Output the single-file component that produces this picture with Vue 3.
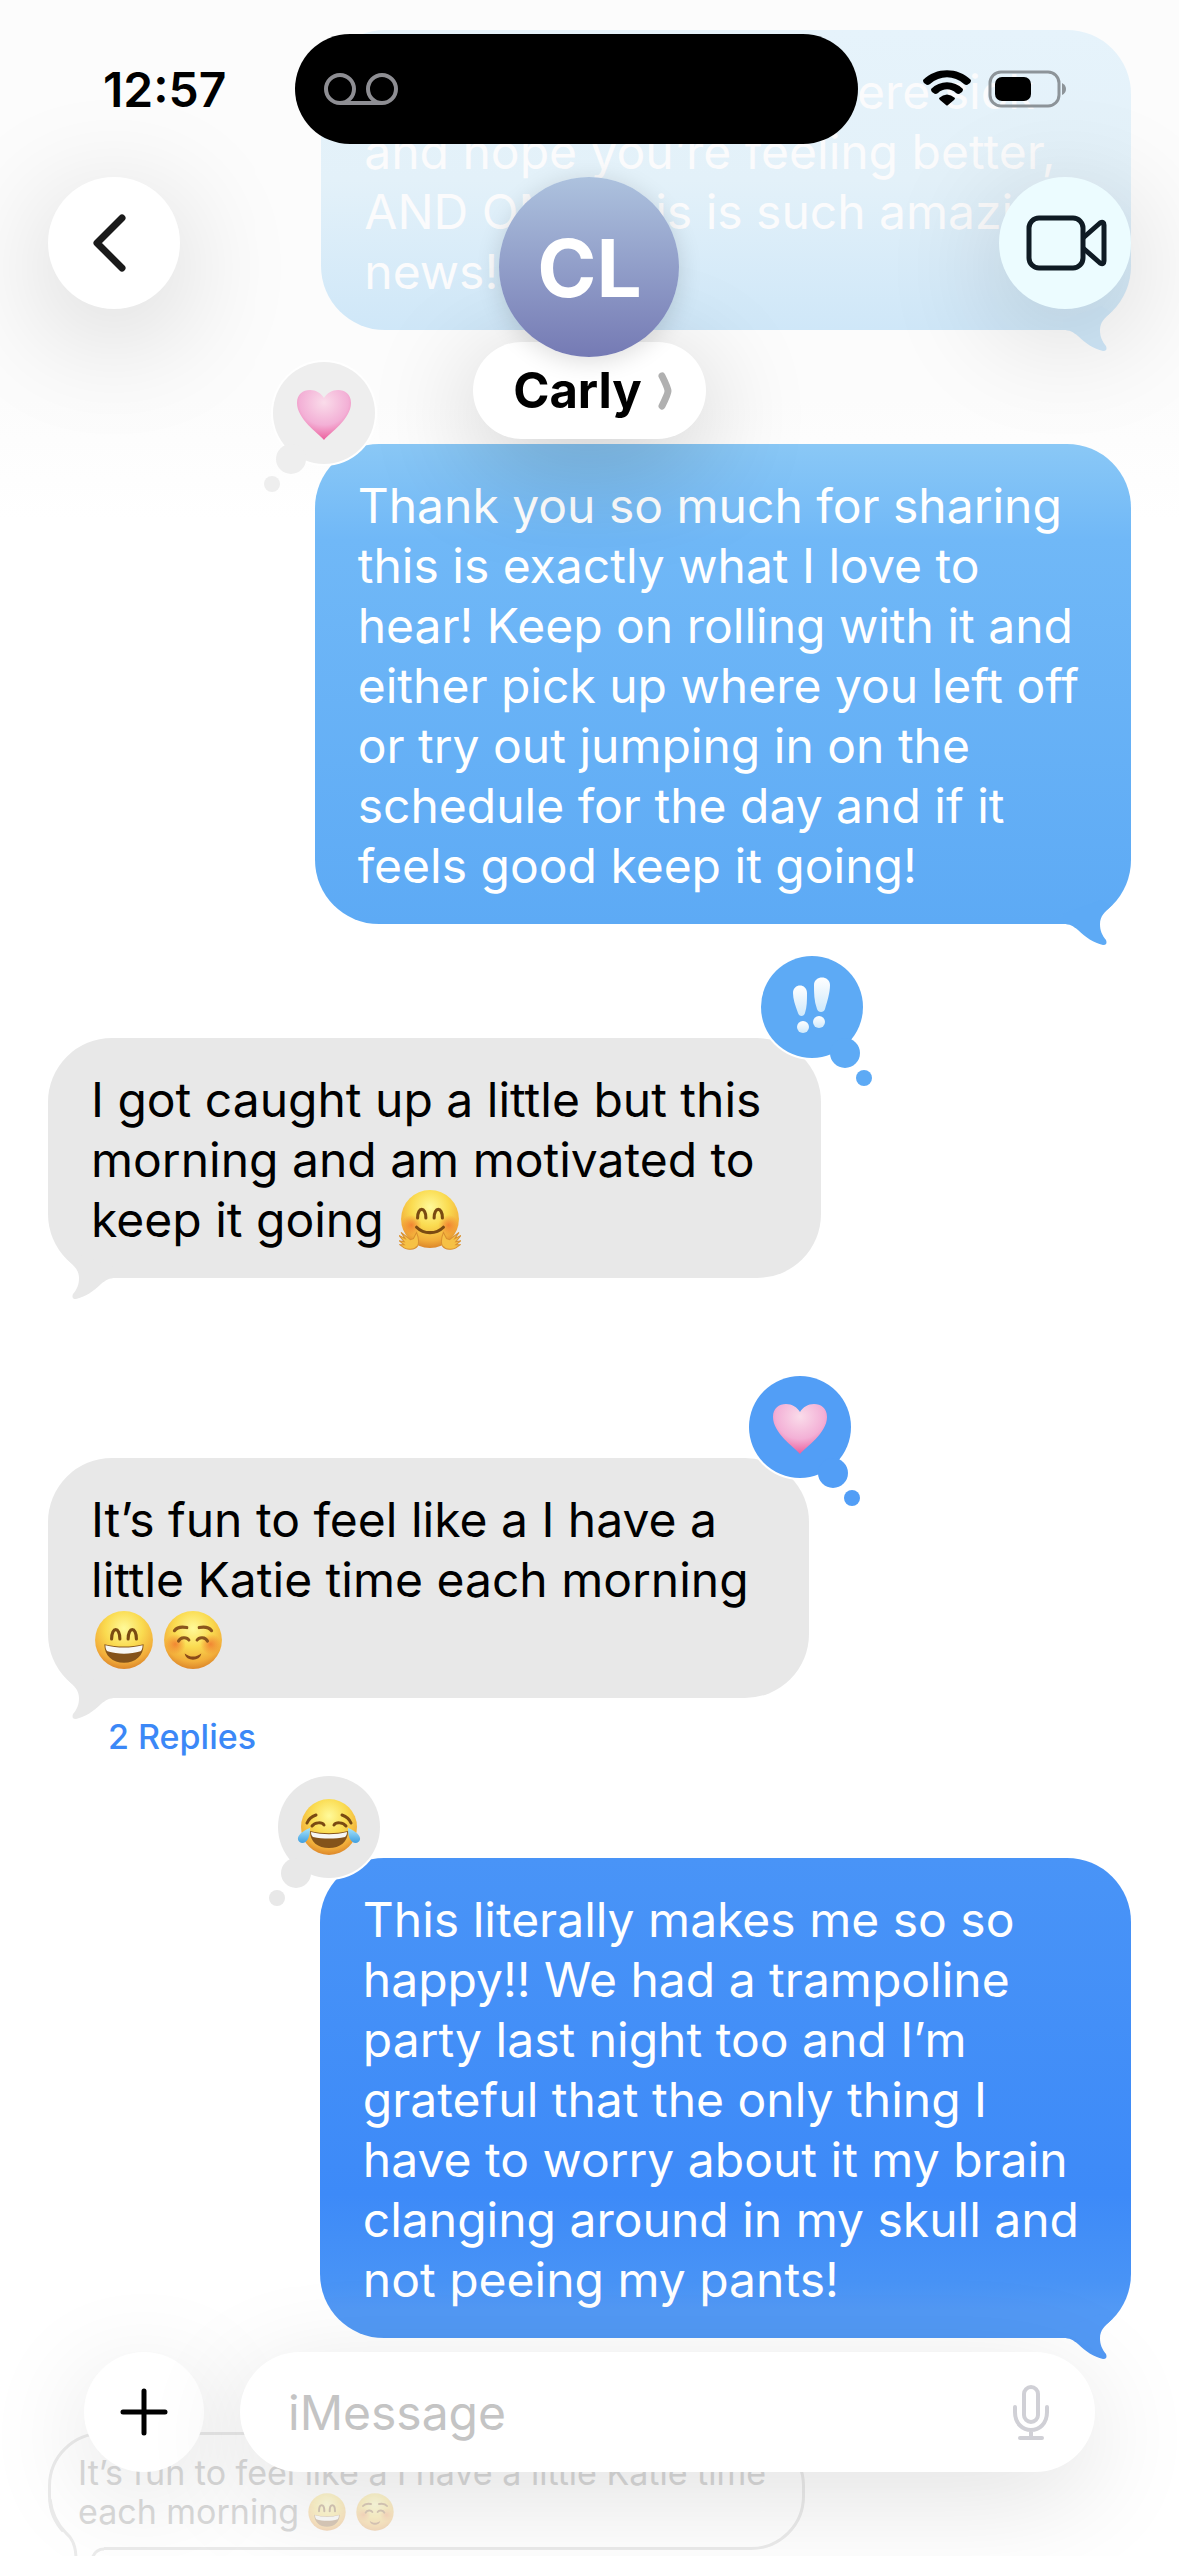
<!-- App.vue - Conversation screen -->
<template>
  <main class="phone">
    <!-- Shared emoji drawings -->
    <svg class="sprites" aria-hidden="true">
      <defs>
        <radialGradient id="face" cx="50%" cy="30%" r="72%">
          <stop offset="0" stop-color="#fffa9a" />
          <stop offset="0.45" stop-color="#fadb50" />
          <stop offset="0.8" stop-color="#f2ad3a" />
          <stop offset="1" stop-color="#d98128" />
        </radialGradient>
        <radialGradient id="blush">
          <stop offset="0" stop-color="#f0702c" stop-opacity="0.75" />
          <stop offset="1" stop-color="#f0702c" stop-opacity="0" />
        </radialGradient>
        <radialGradient id="heart-fill" cx="50%" cy="25%" r="75%">
          <stop offset="0" stop-color="#fadcea" />
          <stop offset="0.6" stop-color="#f3b0d6" />
          <stop offset="1" stop-color="#ec5f9c" />
        </radialGradient>
        <linearGradient id="tear" x1="0" y1="0" x2="0" y2="1">
          <stop offset="0" stop-color="#a9e4fb" />
          <stop offset="1" stop-color="#3f9fe0" />
        </linearGradient>
        <linearGradient id="mark" x1="0" y1="0" x2="0" y2="1">
          <stop offset="0" stop-color="#ffffff" />
          <stop offset="1" stop-color="#cfe9fb" />
        </linearGradient>
      </defs>
      <symbol id="grin" viewBox="0 0 60 60">
        <circle cx="30" cy="30" r="28" fill="url(#face)" />
        <path d="M18 29c0-12 8-12 8 0M34 29c0-12 8-12 8 0" fill="none" stroke="#7a4a12" stroke-width="3" stroke-linecap="round" />
        <path d="M11 34c12 3 26 3 38 0c0 11-8 18-19 18s-19-7-19-18z" fill="#84531a" />
        <path d="M12 35c12 3 24 3 36 0c0 3-1 5-2 6c-10 3-22 3-32 0c-1-1-2-3-2-6z" fill="#f7f7f4" />
      </symbol>
      <symbol id="smile" viewBox="0 0 60 60">
        <circle cx="30" cy="30" r="28" fill="url(#face)" />
        <circle cx="13" cy="34" r="10" fill="url(#blush)" />
        <circle cx="47" cy="34" r="10" fill="url(#blush)" />
        <path d="M12 21c3-4 7-4 12-3M48 21c-3-4-7-4-12-3M16 31c2-4 8-4 10-1M44 31c-2-4-8-4-10-1" fill="none" stroke="#8a551c" stroke-width="3" stroke-linecap="round" />
        <path d="M22 43c5 4 11 4 16 0c-1 8-15 8-16 0z" fill="#8a4a18" />
      </symbol>
      <symbol id="hug" viewBox="0 0 60 60">
        <circle cx="30" cy="29" r="28" fill="url(#face)" />
        <circle cx="12" cy="35" r="10" fill="url(#blush)" />
        <circle cx="48" cy="35" r="10" fill="url(#blush)" />
        <path d="M18 28c0-11 8-11 8 0M34 28c0-11 8-11 8 0" fill="none" stroke="#7a4a12" stroke-width="3" stroke-linecap="round" />
        <path d="M17 37c7 7 19 7 26 0" fill="none" stroke="#7a4a12" stroke-width="3" stroke-linecap="round" />
        <g fill="#f6c145" stroke="#d99030" stroke-width="1">
          <path d="M17 42c2 5 3 9 1 13c-3 4-10 4-13 2l-4-3l4 0l-5-4l5 1l-5-6l6 3l-4-6l9 7l3-1z" />
          <path d="M43 42c-2 5-3 9-1 13c3 4 10 4 13 2l4-3l-4 0l5-4l-5 1l5-6l-6 3l4-6l-9 7l-3-1z" />
        </g>
      </symbol>
      <symbol id="joy" viewBox="0 0 64 60">
        <circle cx="32" cy="30" r="28" fill="url(#face)" />
        <path d="M10 26c2-5 6-7 9-8M54 26c-2-5-6-7-9-8M15 29c3-4 10-4 12-1M49 29c-3-4-10-4-12-1" fill="none" stroke="#7a4a12" stroke-width="3" stroke-linecap="round" />
        <path d="M13 34c12 3 26 3 38 0c0 11-8 17-19 17s-19-6-19-17z" fill="#84531a" />
        <path d="M14 35c12 3 24 3 36 0c0 3-1 4-2 5c-10 2-22 2-32 0c-1-1-2-2-2-5z" fill="#f7f7f4" />
        <path d="M13 31c0 8-2 15-8 15c-6-1-7-9 8-15zM51 31c0 8 2 15 8 15c6-1 7-9-8-15z" fill="url(#tear)" />
      </symbol>
      <symbol id="heart" viewBox="0 0 60 60">
        <path d="M30 57C24 50 3 36 3 20C3 11 9 7 16 7C22 7 27 10 30 15C33 10 38 7 44 7C51 7 57 11 57 20C57 36 36 50 30 57z" fill="url(#heart-fill)" />
      </symbol>
      <symbol id="bangs" viewBox="0 0 60 60">
        <g fill="url(#mark)">
          <path d="M11 16c0-10 14-10 14 0c0 7 0 14-2 20c-1 4-6 4-7 0c-3-8-5-14-5-20z" />
          <path d="M32 8c0-10 16-10 16 0c0 8-3 17-5 24c-1 4-7 4-8 0c-3-8-3-16-3-24z" />
          <circle cx="21" cy="50" r="6" />
          <circle cx="37" cy="45" r="6" />
        </g>
      </symbol>
    </svg>

    <section class="conversation" aria-label="Conversation with Carly">
      <article
        v-for="message in messages"
        :key="message.id"
        class="message"
        :class="[message.sent ? 'sent' : 'received', message.tone]"
      >
        <div class="bubble">
          <p v-for="(line, index) in message.lines" :key="index" class="line">
            {{ line.text
            }}<svg v-for="name in line.emoji" :key="name" class="emoji" role="img" :aria-label="name">
              <use :href="`#${name}`" />
            </svg>
          </p>

          <svg class="tail" viewBox="0 0 70 84" aria-hidden="true">
            <path d="M2 50V60C9 60 12 62 17 66C24 73 33 79 42 81Q47 81 45 76C41 71 39 67 39 60C39 52 44 48 50 42L40 36z" />
          </svg>

          <div v-if="message.reaction" class="reaction" role="img" :aria-label="`Reaction: ${message.reaction}`">
            <svg class="thought" viewBox="0 0 102 102">
              <circle class="ring" cx="51" cy="51" r="53" />
              <circle cx="51" cy="51" r="51" />
              <circle cx="84" cy="97" r="15" />
              <circle cx="103" cy="122" r="8" />
            </svg>
            <svg class="reaction-icon" :class="message.reaction">
              <use :href="`#${message.reaction}`" />
            </svg>
          </div>
        </div>
        <a v-if="message.replies" href="#replies" class="replies">{{ message.replies }} Replies</a>
      </article>

      <blockquote id="replies" class="quote">
        <svg class="quote-tail" viewBox="0 0 56 60" aria-hidden="true">
          <path class="patch" d="M8 34L20 32L56 44V60H8z" />
          <path d="M2 0C4 16 10 26 18 34Q28 42 28 60M44 60Q47 50 56 50" />
        </svg>
        <p>It’s fun to feel like a I have a little Katie time</p>
        <p>
          each morning
          <svg class="emoji-small"><use href="#grin" /></svg>
          <svg class="emoji-small"><use href="#smile" /></svg>
        </p>
      </blockquote>
    </section>

    <header class="top">
      <div class="status">
        <time class="clock">12:57</time>
        <div class="island">
          <svg width="76" height="34" viewBox="0 0 76 34" fill="none" stroke="#8e8e93" stroke-width="4" aria-label="Voicemail">
            <circle cx="17" cy="17" r="14" />
            <circle cx="59" cy="17" r="14" />
            <path d="M17 31H59" />
          </svg>
        </div>
        <div class="indicators">
          <svg width="48" height="36" viewBox="0 0 48 36" aria-label="Wi-Fi">
            <path d="M0 10C13-3 35-3 48 10Q48 12 47 13L44 15Q42 15 41 14C31 5 17 5 7 14Q6 15 4 15L1 13Q0 12 0 10z" />
            <path d="M8 19C17 10 31 10 40 19Q40 21 39 22L36 24Q34 24 33 23C28 18 20 18 15 23Q14 24 12 24L9 22Q8 21 8 19z" />
            <path d="M16 28Q24 21 32 28Q32 29 31 30L25 35Q24 36 23 35L17 30Q16 29 16 28z" />
          </svg>
          <svg width="80" height="38" viewBox="0 0 80 38" aria-label="Battery">
            <rect x="2" y="2" width="69" height="34" rx="11" fill="none" stroke="#8d9499" stroke-width="3" />
            <rect x="7" y="7" width="36" height="24" rx="7" />
            <path d="M74 13Q78 15 78 19T74 25z" fill="#8d9499" />
          </svg>
        </div>
      </div>

      <nav class="nav">
        <button type="button" class="round back" aria-label="Back">
          <svg width="34" height="58" viewBox="0 0 34 58" fill="none" stroke="#1a1a1a" stroke-width="7" stroke-linecap="round" stroke-linejoin="round">
            <path d="M29 4L4 29L29 54" />
          </svg>
        </button>
        <div class="contact">
          <span class="avatar">CL</span>
          <button type="button" class="name">
            Carly
            <svg width="14" height="38" viewBox="0 0 14 38" fill="none" stroke="#b0b0b0" stroke-width="7" stroke-linecap="round" stroke-linejoin="round">
              <path d="M4 4Q10 16 10 19T4 34" />
            </svg>
          </button>
        </div>
        <button type="button" class="round video" aria-label="Video call">
          <svg width="82" height="56" viewBox="0 0 82 56" fill="none" stroke="#0f1b24" stroke-width="5" stroke-linejoin="round">
            <rect x="3" y="3" width="54" height="50" rx="10" />
            <path d="M57 23L74 8Q78 6 78 10V46Q78 50 74 48L57 33" />
          </svg>
        </button>
      </nav>
    </header>

    <footer class="composer">
      <button type="button" class="add" aria-label="Add attachment">
        <svg width="48" height="48" viewBox="0 0 48 48" stroke="#000" stroke-width="5" stroke-linecap="round">
          <path d="M24 3V45M3 24H45" />
        </svg>
      </button>
      <div class="field">
        <input v-model="draft" type="text" placeholder="iMessage" aria-label="iMessage" />
        <button type="button" class="dictate" aria-label="Dictate">
          <svg width="38" height="56" viewBox="0 0 38 56" fill="none" stroke="#d0d0d6" stroke-width="4" stroke-linecap="round">
            <rect x="12" y="3" width="14" height="35" rx="7" />
            <path d="M3 23V28C3 52 35 52 35 28V23M19 46V54M8 54H30" />
          </svg>
        </button>
      </div>
    </footer>
  </main>
</template>

<script setup>
import { ref } from 'vue';

const draft = ref('');

const messages = [
  {
    id: 1,
    sent: true,
    tone: 'faded',
    lines: [
      { text: 'So sorry to see you were sick' },
      { text: 'and hope you’re feeling better,' },
      { text: 'AND OMG this is such amazing' },
      { text: 'news!' }
    ]
  },
  {
    id: 2,
    sent: true,
    tone: 'sky',
    reaction: 'heart',
    lines: [
      { text: 'Thank you so much for sharing' },
      { text: 'this is exactly what I love to' },
      { text: 'hear! Keep on rolling with it and' },
      { text: 'either pick up where you left off' },
      { text: 'or try out jumping in on the' },
      { text: 'schedule for the day and if it' },
      { text: 'feels good keep it going!' }
    ]
  },
  {
    id: 3,
    sent: false,
    tone: 'react-sky',
    reaction: 'bangs',
    lines: [
      { text: 'I got caught up a little but this' },
      { text: 'morning and am motivated to' },
      { text: 'keep it going ', emoji: ['hug'] }
    ]
  },
  {
    id: 4,
    sent: false,
    tone: 'react-azure',
    reaction: 'heart',
    replies: 2,
    lines: [
      { text: 'It’s fun to feel like a I have a' },
      { text: 'little Katie time each morning' },
      { text: '', emoji: ['grin', 'smile'] }
    ]
  },
  {
    id: 5,
    sent: true,
    tone: 'deep',
    reaction: 'joy',
    lines: [
      { text: 'This literally makes me so so' },
      { text: 'happy!! We had a trampoline' },
      { text: 'party last night too and I’m' },
      { text: 'grateful that the only thing I' },
      { text: 'have to worry about it my brain' },
      { text: 'clanging around in my skull and' },
      { text: 'not peeing my pants!' }
    ]
  }
];
</script>

<style>
body {
  margin: 0;
  background: #ffffff;
}
</style>

<style scoped>
.phone {
  position: relative;
  height: 100vh;
  overflow: hidden;
  background: linear-gradient(#fcfcfc 0, #fcfcfc 400px, #ffffff 520px);
  color: #000000;
  font-family: Inter, "Liberation Sans", sans-serif;
}

.sprites {
  position: absolute;
  width: 0;
  height: 0;
}

button {
  padding: 0;
  border: none;
  font-family: inherit;
  cursor: pointer;
}

/* Messages */
.conversation {
  display: flex;
  flex-direction: column;
  padding: 30px 48px 0;
}

.message {
  display: flex;
  flex-direction: column;
  margin-bottom: 114px;
}

.sent {
  align-items: flex-end;
}

.received {
  align-items: flex-start;
}

.bubble {
  position: relative;
  padding: 32px 52px 28px 43px;
  border-radius: 64px;
  font-size: 48px;
  line-height: 60px;
}

.received .bubble {
  padding-right: 60px;
}

.faded .bubble {
  padding-right: 60px;
}

.line {
  display: flex;
  align-items: center;
  height: 60px;
  margin: 0;
  white-space: pre;
}

.emoji {
  width: 62px;
  height: 62px;
  margin: 0 5px 0 2px;
}

.tail {
  position: absolute;
  right: 0;
  bottom: -24px;
  width: 70px;
  height: 84px;
}

.received .tail {
  right: auto;
  left: 0;
  transform: scaleX(-1);
}

.sent .bubble {
  color: #ffffff;
}

.received .bubble {
  background: #e8e8e8;
}

.received .tail {
  fill: #e8e8e8;
}

.faded .bubble {
  background: linear-gradient(#e6f3fb, #e3f1f9 50%, #cfe7f8);
  color: #fbfbfc;
}

.faded .tail {
  fill: #cfe7f8;
}

.sky .bubble {
  background: linear-gradient(#8ac8f6, #70b8f7 20%, #5daaf5);
}

.sky .tail {
  fill: #5daaf5;
}

.deep .bubble {
  background: linear-gradient(#4994f7, #3d8af8 70%, #4893f6 88%, #5299f5 94%);
}

.deep .tail {
  fill: #5299f5;
}

.react-sky {
  margin-bottom: 180px;
}

.react-azure {
  margin-bottom: 101px;
}

.deep {
  margin-bottom: 94px;
}

.replies {
  margin: 19px 0 0 60px;
  color: #3b88f7;
  font-size: 34px;
  font-weight: 500;
  line-height: 40px;
  text-decoration: none;
}

/* Tapbacks */
.reaction {
  position: absolute;
  top: -82px;
  display: flex;
  align-items: center;
  justify-content: center;
  width: 102px;
  height: 102px;
}

.sent .reaction {
  left: -42px;
}

.received .reaction {
  right: -42px;
}

.thought {
  position: absolute;
  inset: 0;
  overflow: visible;
  fill: #e8e8e8;
}

.sky .thought {
  fill: #eeeeee;
}

.react-sky .thought {
  fill: #5daaf5;
}

.react-azure .thought {
  fill: #529ef6;
}

.sent .thought {
  transform: scaleX(-1);
}

.thought .ring {
  fill: #ffffff;
}

.reaction-icon {
  position: relative;
  width: 60px;
  height: 60px;
}

.reaction-icon.joy {
  width: 64px;
}

/* Quoted message */
.quote {
  position: relative;
  align-self: flex-start;
  margin: 0;
  padding: 18px 36px 16px 27px;
  border: 3px solid #ebebeb;
  border-radius: 54px;
  color: #dadada;
  font-size: 34px;
  line-height: 39px;
}

.quote p {
  position: relative;
  display: flex;
  align-items: center;
  gap: 8px;
  height: 39px;
  margin: 0;
}

.emoji-small {
  width: 40px;
  height: 40px;
  opacity: 0.3;
}

.quote-tail {
  position: absolute;
  left: -3px;
  bottom: -12px;
  width: 56px;
  height: 60px;
  fill: none;
  stroke: #ebebeb;
  stroke-width: 3;
}

.quote-tail .patch {
  fill: #ffffff;
  stroke: none;
}

/* Header */
.top {
  position: absolute;
  top: 0;
  right: 0;
  left: 0;
}

.status {
  display: flex;
  align-items: center;
  padding-top: 34px;
}

.clock {
  box-sizing: border-box;
  width: 25%;
  padding-left: 103px;
  font-size: 48px;
  font-weight: 600;
}

.island {
  display: flex;
  flex: 0 0 563px;
  align-items: center;
  box-sizing: border-box;
  height: 110px;
  padding-left: 28px;
  border-radius: 55px;
  background: #000000;
}

.indicators {
  display: flex;
  gap: 17px;
  padding-left: 65px;
}

.nav {
  display: flex;
  align-items: flex-start;
  justify-content: space-between;
  padding: 33px 48px 0;
}

.round {
  display: flex;
  align-items: center;
  justify-content: center;
  width: 132px;
  height: 132px;
  border-radius: 50%;
  background: #ffffff;
  box-shadow: 0 24px 120px rgba(0, 0, 0, 0.18);
}

.round svg {
  flex: none;
}

.back {
  padding-right: 9px;
}

.video {
  padding-left: 4px;
  background: #ecfcff;
}

.contact {
  display: flex;
  flex-direction: column;
  align-items: center;
}

.avatar {
  z-index: 1;
  display: flex;
  align-items: center;
  justify-content: center;
  width: 180px;
  height: 180px;
  border-radius: 50%;
  background: linear-gradient(#adc2de, #757ab4);
  box-shadow: 0 4px 24px rgba(0, 0, 0, 0.14);
  color: #ffffff;
  font-size: 80px;
  font-weight: 700;
}

.name {
  display: flex;
  align-items: center;
  gap: 16px;
  height: 97px;
  margin-top: -15px;
  padding: 0 34px 0 40px;
  border-radius: 49px;
  background: #ffffff;
  box-shadow: 0 24px 110px rgba(0, 0, 0, 0.22);
  color: #000000;
  font-size: 49px;
  font-weight: 700;
}

/* Composer */
.composer {
  position: absolute;
  right: 0;
  bottom: 84px;
  left: 0;
  display: flex;
  gap: 36px;
  padding: 0 84px;
}

.add,
.field {
  display: flex;
  align-items: center;
  height: 120px;
  border-radius: 60px;
  background: #ffffff;
  box-shadow: 0 24px 110px rgba(0, 0, 0, 0.12);
}

.add {
  flex: 0 0 120px;
  justify-content: center;
}

.field {
  flex: 1;
  min-width: 0;
  padding: 0 45px 0 48px;
}

.field input {
  flex: 1;
  min-width: 0;
  padding: 0;
  border: none;
  outline: none;
  background: none;
  font-family: inherit;
  font-size: 48px;
}

.field input::placeholder {
  color: #c4c4c4;
  opacity: 1;
}

.dictate {
  display: flex;
  background: none;
}
</style>
